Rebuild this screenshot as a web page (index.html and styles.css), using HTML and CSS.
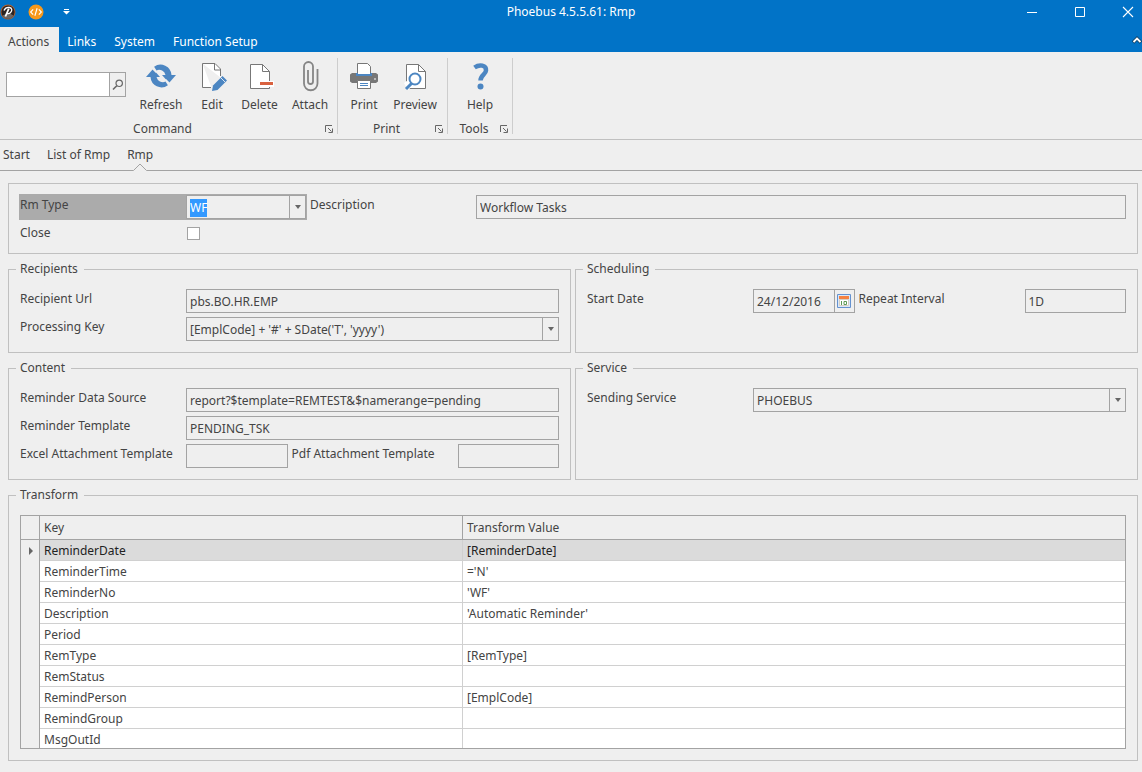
FILE: index.html
```html
<!DOCTYPE html>
<html lang="en">
<head>
<meta charset="utf-8">
<title>Phoebus 4.5.5.61: Rmp</title>
<link rel="stylesheet" href="styles.css">
</head>
<body>
<header class="window-head">
  <div class="title-bar">
    <div class="quick">
      <svg class="logo" width="16" height="16" viewBox="0 0 16 16"><circle cx="8" cy="8" r="7.500" fill="#b8612c"/><circle cx="8" cy="8" r="6.600" fill="#2b2422"/><path d="M2.500 11.500a6.300 6.300 0 0 0 11 0L9 9z" fill="#6d6865"/><path d="M4 6.500C5 4.200 7 3.200 9.400 3.500c2.800.4 3 3.200 1.200 5C9.500 9.600 8 9.800 7 9.300" fill="none" stroke="#fff" stroke-width="1.300"/><path d="M8.800 4.600L5.400 12.500" stroke="#fff" stroke-width="1.800"/></svg>
      <button class="quick-btn" aria-label="Customize code"><svg width="16" height="16" viewBox="0 0 17 17"><circle cx="8.500" cy="8.500" r="8" fill="#f7991c"/><path d="M5.500 5.700L2.800 8.500l2.700 2.800M11.500 5.700l2.700 2.800-2.700 2.800M9.700 4.500l-2.400 8" fill="none" stroke="#fff" stroke-width="1.200"/></svg></button>
      <button class="quick-btn" aria-label="Quick access menu"><svg width="7" height="6" viewBox="0 0 7 6"><path d="M1 0h5v1H1zM0 2h7L3.500 5.500z" fill="#fff"/></svg></button>
    </div>
    <h1 class="title">Phoebus 4.5.5.61: Rmp</h1>
    <div class="controls">
      <button class="control" aria-label="Minimize"><svg width="12" height="12" viewBox="0 0 12 12"><path d="M1 6.500h10" stroke="#fff"/></svg></button>
      <button class="control" aria-label="Maximize"><svg width="12" height="12" viewBox="0 0 12 12"><path d="M1.500 1.500h9v9h-9z" fill="none" stroke="#fff"/></svg></button>
      <button class="control" aria-label="Close"><svg width="12" height="12" viewBox="0 0 12 12"><path d="M1 1l10 10M11 1L1 11" stroke="#fff" stroke-width="1.100"/></svg></button>
    </div>
  </div>
  <nav class="menu">
    <button class="menu-tab active">Actions</button>
    <button class="menu-tab">Links</button>
    <button class="menu-tab">System</button>
    <button class="menu-tab">Function Setup</button>
    <button class="collapse" aria-label="Collapse ribbon"><svg width="10" height="8" viewBox="0 0 10 8"><path d="M1 6.500L5 2.500l4 4" fill="none" stroke="#123f63" stroke-width="3.500"/><path d="M1.500 6L5 2.500 8.500 6" fill="none" stroke="#fff" stroke-width="1.800"/></svg></button>
  </nav>
</header>

<div class="ribbon">
  <section class="ribbon-group">
    <div class="tools">
      <div class="search">
        <input type="text" aria-label="Search">
        <button aria-label="Find"><svg width="12" height="12" viewBox="0 0 12 12"><circle cx="7.200" cy="4.300" r="3.200" fill="none" stroke="#666" stroke-width="1.200"/><path d="M4.800 6.700L1 10.500" stroke="#666" stroke-width="1.600"/></svg></button>
      </div>
      <button class="tool tool-wide"><svg width="32" height="32" viewBox="0 0 32 32"><g fill="#4c86c2"><path d="M1 17l7-8 7 8h-3.500a6.600 6.600 0 0 0 9 4.600l2.400 3.600A11 11 0 0 1 5.500 17z" /><path d="M31 15l-7 8-7-8h3.500a6.600 6.600 0 0 0-9-4.600L9.100 6.800A11 11 0 0 1 26.500 15z"/></g><path d="M6.500 7.500l5 5M25.500 24.500l-5-5" stroke="#efefef" stroke-width="1.500"/></svg>Refresh</button>
      <button class="tool tool-edit"><svg width="32" height="32" viewBox="0 0 32 32"><path d="M6.500 3.500h13l5 5v9M15.500 27.500h-9v-24" fill="#fff"/><path d="M19 3.500H6.500v24H15M19 3.500l5.500 5.500V16" fill="none" stroke="#777"/><path d="M18.500 4v6h6" fill="none" stroke="#777"/><path d="M16 31l1-5.500 9.500-9.500 4.500 4.500-9.500 9.500z" fill="#4c86c2"/><path d="M24.500 17.500l4.500 4.500" stroke="#fff" stroke-width=".8"/></svg>Edit</button>
      <button class="tool tool-delete"><svg width="32" height="32" viewBox="0 0 32 32"><path d="M6.500 4.500h12l7 7v17h-19z" fill="#fff" stroke="#777"/><path d="M18.500 4.500v7h7" fill="none" stroke="#777"/><path d="M16 21h14v6H16z" fill="#fff"/><path d="M16 22h13v3H16z" fill="#d9613f"/></svg>Delete</button>
      <button class="tool tool-wide"><svg width="32" height="32" viewBox="0 0 32 32"><path d="M14 10v11.500a2.500 2.500 0 0 0 5 0V6.500a4.500 4.500 0 0 0-9 0v17a6.700 6.700 0 0 0 13.500 0V9" fill="none" stroke="#858585" stroke-width="1.800"/></svg>Attach</button>
    </div>
    <div class="caption"><span>Command</span><button aria-label="Command options"><svg width="8" height="8" viewBox="0 0 8 8"><path d="M.5 7V.5H7M3 3l3.500 3.500M7.500 3.500v4h-4" fill="none" stroke="#666"/></svg></button></div>
  </section>
  <section class="ribbon-group">
    <div class="tools">
      <button class="tool tool-print"><svg width="32" height="32" viewBox="0 0 32 32"><path d="M2 14.500l2-1.500h24l2 1.500v7l-2 1.500H4l-2-1.500z" fill="#777"/><path d="M9.500 3.500h10l3 3v9h-13z" fill="#fff" stroke="#777"/><path d="M8 13h16v3H8z" fill="#4c86c2"/><path d="M10 12h12v2H10z" fill="#fff"/><path d="M9.500 20.500h13v8h-13z" fill="#fff" stroke="#777"/><path d="M12 23.500h8M12 25.500h8" stroke="#4c86c2"/><path d="M26 19h2" stroke="#fff"/></svg>Print</button>
      <button class="tool tool-preview"><svg width="32" height="32" viewBox="0 0 32 32"><path d="M7.500 4.500h12l7 7v17h-19z" fill="#fff" stroke="#777"/><path d="M19.500 4.500v7h7" fill="none" stroke="#777"/><path d="M5 23l7-5 4 6-7 6z" fill="#fff"/><circle cx="16" cy="19" r="5.500" fill="#fff" stroke="#4c86c2" stroke-width="2"/><path d="M12.500 23.500L7 29" stroke="#4c86c2" stroke-width="3"/></svg>Preview</button>
    </div>
    <div class="caption"><span>Print</span><button aria-label="Print options"><svg width="8" height="8" viewBox="0 0 8 8"><path d="M.5 7V.5H7M3 3l3.500 3.500M7.500 3.500v4h-4" fill="none" stroke="#666"/></svg></button></div>
  </section>
  <section class="ribbon-group">
    <div class="tools">
      <button class="tool tool-help"><svg width="32" height="32" viewBox="0 0 32 32"><path d="M10.500 7.500c5-3.500 12-2.500 11.500 3-.3 4-5.500 4.500-5.500 10" fill="none" stroke="#4c86c2" stroke-width="4.500"/><circle cx="16.500" cy="26.500" r="3" fill="#4c86c2"/></svg>Help</button>
    </div>
    <div class="caption"><span>Tools</span><button aria-label="Tools options"><svg width="8" height="8" viewBox="0 0 8 8"><path d="M.5 7V.5H7M3 3l3.500 3.500M7.500 3.500v4h-4" fill="none" stroke="#666"/></svg></button></div>
  </section>
</div>

<nav class="pages">
  <a href="#start">Start</a>
  <a href="#list">List of Rmp</a>
  <a href="#rmp" class="current" aria-current="page">Rmp<svg class="notch" width="14" height="8" viewBox="0 0 14 8"><path d="M0 8L7 1l7 7z" fill="#efefef"/><path d="M.5 7.500L7 1l6.500 6.500" fill="none" stroke="#a3a3a3"/></svg></a>
</nav>

<main class="form">
  <section class="box general">
    <div class="focused">
      <label for="rm-type">Rm Type</label>
      <div class="field with-button"><input id="rm-type" type="text" value="WF"><button class="arrow" aria-label="Show types"></button></div>
    </div>
    <label class="after" for="description">Description</label>
    <input class="field" id="description" type="text" value="Workflow Tasks" readonly>
    <div class="check-row">
      <label for="close">Close</label>
      <input id="close" type="checkbox">
    </div>
  </section>

  <div class="columns">
    <fieldset class="box">
      <legend>Recipients</legend>
      <div class="row"><label for="url">Recipient Url</label><input class="field wide" id="url" type="text" value="pbs.BO.HR.EMP" readonly></div>
      <div class="row"><label for="key">Processing Key</label><div class="field with-button wide"><select id="key"><option>[EmplCode] + '#' + SDate('T', 'yyyy')</option></select><span class="arrow"></span></div></div>
    </fieldset>
    <fieldset class="box">
      <legend>Scheduling</legend>
      <div class="row">
        <label for="start">Start Date</label>
        <div class="field with-button"><input id="start" type="text" value="24/12/2016"><button class="calendar" aria-label="Pick date"><svg width="14" height="14" viewBox="0 0 14 14"><path d="M.5.500h13v13H.5z" fill="#dbe8f8" stroke="#6491cf"/><path d="M2 2h10v3H2z" fill="#f58242"/><path d="M2.500 5.500h9v6h-9z" fill="#fff" stroke="#d6cfc4"/><path d="M4.500 7v4M7 7.500h2.500v3H7z" fill="none" stroke="#5c9a55"/></svg></button></div>
        <label class="after" for="interval">Repeat Interval</label>
        <input class="field" id="interval" type="text" value="1D">
      </div>
    </fieldset>
    <fieldset class="box">
      <legend>Content</legend>
      <div class="row"><label for="source">Reminder Data Source</label><input class="field wide" id="source" type="text" value="report?$template=REMTEST&amp;$namerange=pending"></div>
      <div class="row"><label for="template">Reminder Template</label><input class="field wide" id="template" type="text" value="PENDING_TSK"></div>
      <div class="row">
        <label for="excel">Excel Attachment Template</label><input class="field" id="excel" type="text">
        <label class="after" for="pdf">Pdf Attachment Template</label><input class="field" id="pdf" type="text">
      </div>
    </fieldset>
    <fieldset class="box">
      <legend>Service</legend>
      <div class="row"><label for="service">Sending Service</label><div class="field with-button wide"><select id="service"><option>PHOEBUS</option></select><span class="arrow"></span></div></div>
    </fieldset>
  </div>

  <fieldset class="box">
    <legend>Transform</legend>
    <div class="grid-view">
      <table>
        <colgroup><col class="col-mark"><col class="col-key"><col></colgroup>
        <thead><tr><th class="mark"></th><th>Key</th><th>Transform Value</th></tr></thead>
        <tbody>
          <tr class="selected"><td class="mark"><svg width="4" height="8" viewBox="0 0 4 8"><path d="M0 0l4 4-4 4z" fill="#666"/></svg></td><td>ReminderDate</td><td>[ReminderDate]</td></tr>
          <tr><td class="mark"></td><td>ReminderTime</td><td>='N'</td></tr>
          <tr><td class="mark"></td><td>ReminderNo</td><td>'WF'</td></tr>
          <tr><td class="mark"></td><td>Description</td><td>'Automatic Reminder'</td></tr>
          <tr><td class="mark"></td><td>Period</td><td></td></tr>
          <tr><td class="mark"></td><td>RemType</td><td>[RemType]</td></tr>
          <tr><td class="mark"></td><td>RemStatus</td><td></td></tr>
          <tr><td class="mark"></td><td>RemindPerson</td><td>[EmplCode]</td></tr>
          <tr><td class="mark"></td><td>RemindGroup</td><td></td></tr>
          <tr><td class="mark"></td><td>MsgOutId</td><td></td></tr>
        </tbody>
      </table>
    </div>
  </fieldset>
</main>
<script src="app.js"></script>
</body>
</html>
```
FILE: styles.css
```css
* { box-sizing: border-box; }

body {
  margin: 0;
  background: #efefef;
  color: #444;
  font: 12px/18px "Noto Sans", "Open Sans", sans-serif;
}

button, input, select {
  margin: 0;
  padding: 0;
  border: 0;
  border-radius: 0;
  background: none;
  color: inherit;
  font: inherit;
}

input, select { outline: 0; appearance: none; min-width: 0; }
svg { display: block; flex: none; }

/* Title bar and menu */
.window-head { background: #0173c7; color: #fff; }

.title-bar {
  display: grid;
  grid-template-columns: 1fr auto 1fr;
  align-items: center;
  height: 27px;
  padding-bottom: 4px;
}

.quick { display: flex; align-items: center; gap: 12px; }
.quick-btn:last-child { padding-left: 7px; }
.title { margin: 0; font-size: 12px; font-weight: 400; }
.controls { display: flex; justify-content: flex-end; gap: 20px; }
.control { display: flex; justify-content: center; width: 28px; }

.menu { display: flex; height: 25px; }
.menu-tab { padding: 6px 10px 1px 8px; }
.menu-tab.active { background: #efefef; color: #444; }
.collapse { margin-left: auto; overflow: hidden; }

/* Ribbon */
.ribbon {
  display: flex;
  padding: 6px 0 5px;
  border-bottom: 1px solid #c0c0c0;
}

.ribbon-group { border-right: 1px solid #cdcdcd; }
.tools { display: flex; height: 61px; }

.search {
  display: flex;
  width: 120px;
  height: 25px;
  margin: 14px 8px 0 6px;
  border: 1px solid #a3a3a3;
}

.search input { flex: 1; background: #fff; }
.search button { width: 16px; padding-left: 2px; border-left: 1px solid #a3a3a3; }

.tool { display: flex; flex-direction: column; align-items: center; padding-top: 2px; gap: 4px; }
.tool-wide { width: 54px; }
.tool-edit { width: 48px; }
.tool-delete { width: 47px; }
.tool-print { width: 52px; }
.tool-preview { width: 50px; margin-right: 7px; }
.tool-help { width: 64px; }

.caption { display: flex; height: 15px; line-height: 20px; }
.caption span { flex: 1; text-align: center; }
.caption button { padding: 4px 4px 0 0; }

/* Page tabs */
.pages {
  display: flex;
  gap: 17px;
  height: 31px;
  padding: 6px 3px;
  border-bottom: 1px solid #a3a3a3;
}

.pages a { position: relative; color: inherit; text-decoration: none; }
.notch { position: absolute; left: 50%; bottom: -7px; margin-left: -7px; }

/* Form */
.form { display: flex; flex-direction: column; gap: 6px; padding: 12px 4px 11px 8px; }
.box { min-width: 0; margin: 0; padding: 10px 11px 11px; border: 1px solid #c0c0c0; }
legend { margin-left: -4px; padding: 0 6px 2px 4px; line-height: 17px; }
.columns { display: grid; grid-template-columns: 1fr 1fr; gap: 6px 4px; }

.row { display: grid; grid-template-columns: 166px 1fr 170px 1fr; }
.row + .row { margin-top: 4px; }
.wide { grid-column: 2 / -1; }
label { line-height: 20px; }
.after { padding-left: 4px; }

.field { width: 100%; height: 24px; border: 1px solid #a3a3a3; }
input.field { padding: 1px 3px 0; }
.with-button { display: grid; grid-template-columns: 1fr auto; }
.with-button input, .with-button select { width: 100%; padding: 1px 3px 0; }
.with-button select { grid-column: 1 / -1; grid-row: 1; }
.arrow { grid-column: 2; grid-row: 1; width: 16px; border-left: 1px solid #a3a3a3; pointer-events: none; }

.arrow::after {
  content: "";
  display: block;
  width: 0;
  margin: 9px auto 0;
  border: 3px solid transparent;
  border-top: 4px solid #666;
}

button.arrow::after { margin-top: 3px; }
.calendar { width: 20px; padding-left: 2px; border-left: 1px solid #a3a3a3; }

.general { display: grid; grid-template-columns: 286px 170px 1fr; row-gap: 4px; padding-top: 11px; }
.focused { display: grid; grid-template-columns: 166px 1fr; background: #ababab; box-shadow: 0 0 0 1px #ababab; }
.focused .field { background: #efefef; }
.focused ::selection { background: #3399ff; color: #fff; }
.check-row { display: grid; grid-template-columns: 167px 1fr; align-items: center; height: 19px; }
.check-row input { width: 13px; height: 13px; border: 1px solid #a3a3a3; background: #fff; }

/* Transform table */
.grid-view { height: 234px; overflow: hidden; border: 1px solid #a3a3a3; }
table { width: 100%; table-layout: fixed; border-collapse: separate; border-spacing: 0; }
.col-mark { width: 19px; }
.col-key { width: 423px; }
th, td { height: 21px; border-right: 1px solid #d0d0d0; border-bottom: 1px solid #d0d0d0; background: #fff; text-align: left; font-weight: 400; }
td { padding: 2px 4px 0; }
th { height: 24px; padding: 0 4px; border-color: #a3a3a3; background: #efefef; }
th:last-child, td:last-child { border-right: 0; }
td.mark { padding: 0 0 0 8px; border-right-color: #a3a3a3; border-bottom: 0; background: #efefef; }
.selected td { background: #dbdbdb; color: #222; }
.selected td.mark { background: #efefef; }
```
FILE: app.js
```js
const type = document.getElementById("rm-type");
type.focus();
type.select();
```
